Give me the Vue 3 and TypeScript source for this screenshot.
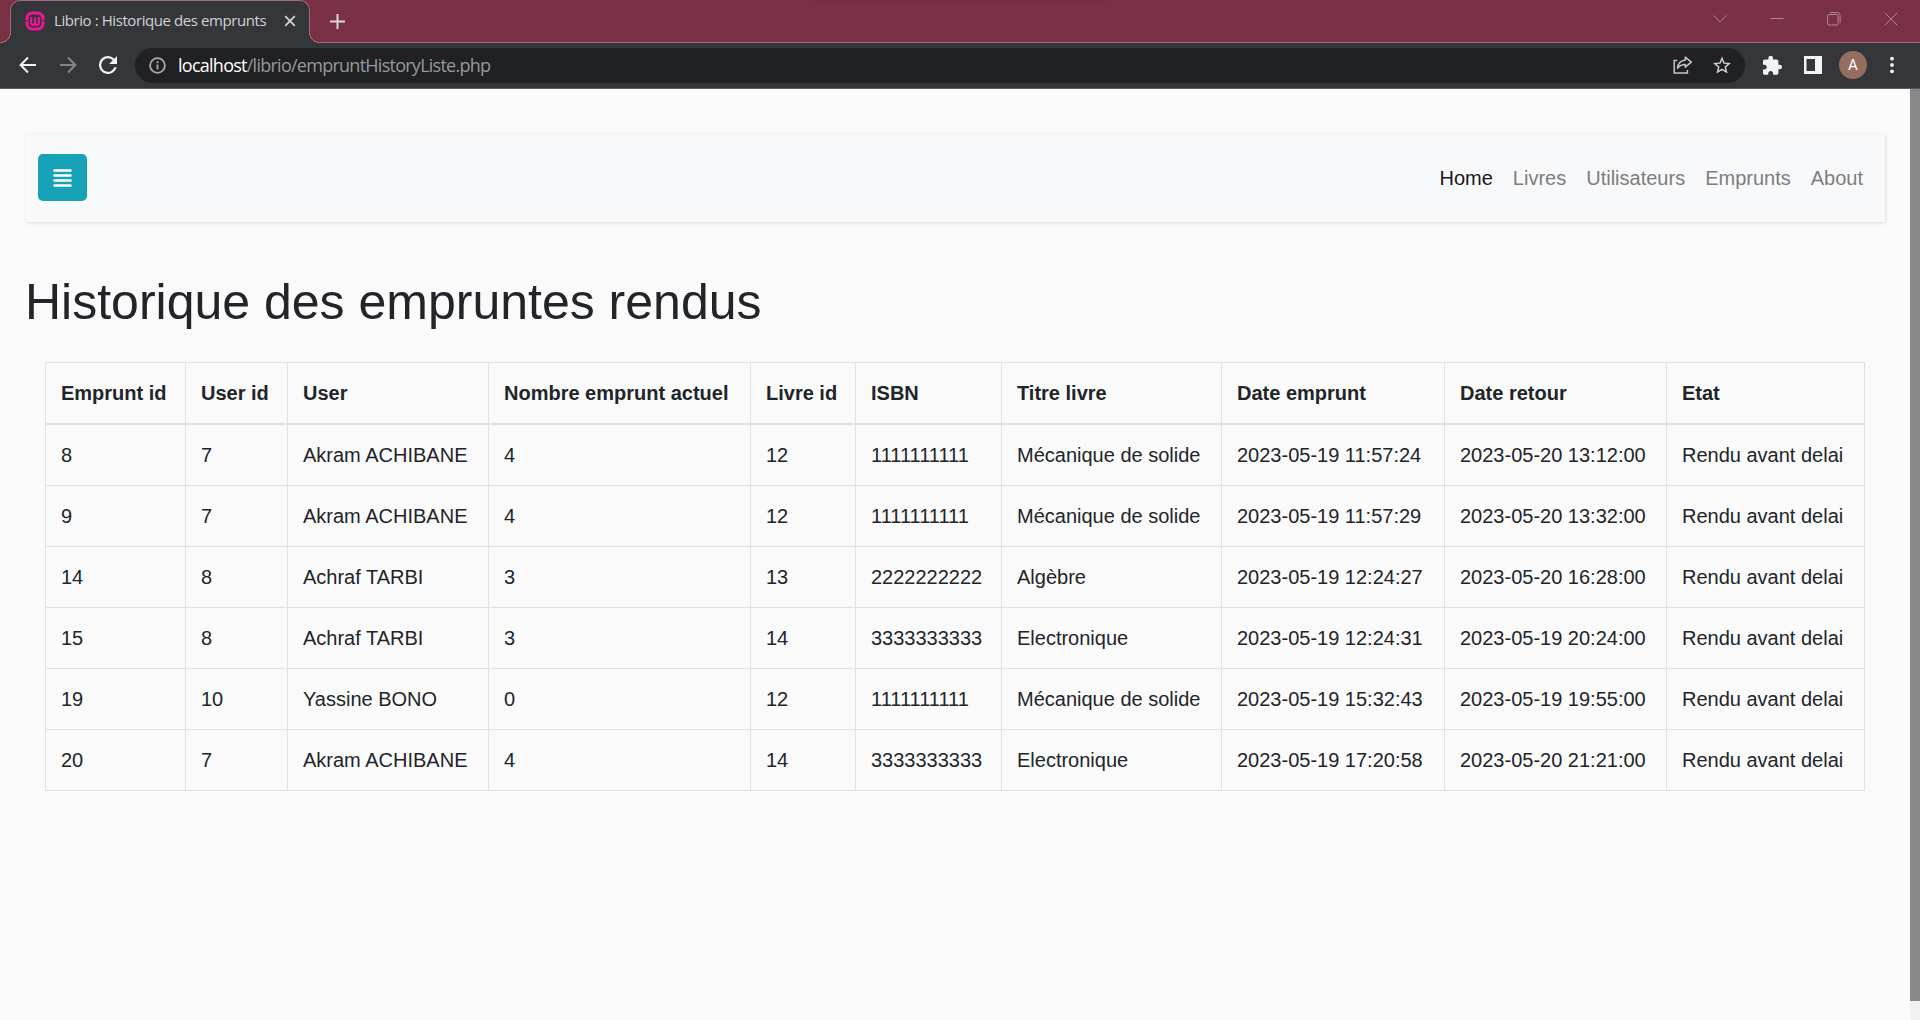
<script setup lang="ts">
interface Loan {
  id: number
  userId: number
  user: string
  active: number
  bookId: number
  isbn: string
  title: string
  borrowed: string
  returned: string
  state: string
}

const links: string[] = ['Home', 'Livres', 'Utilisateurs', 'Emprunts', 'About']

const columns: string[] = [
  'Emprunt id', 'User id', 'User', 'Nombre emprunt actuel', 'Livre id',
  'ISBN', 'Titre livre', 'Date emprunt', 'Date retour', 'Etat',
]

const onTime = 'Rendu avant delai'
const loans: Loan[] = [
  { id: 8, userId: 7, user: 'Akram ACHIBANE', active: 4, bookId: 12, isbn: '1111111111', title: 'Mécanique de solide', borrowed: '2023-05-19 11:57:24', returned: '2023-05-20 13:12:00', state: onTime },
  { id: 9, userId: 7, user: 'Akram ACHIBANE', active: 4, bookId: 12, isbn: '1111111111', title: 'Mécanique de solide', borrowed: '2023-05-19 11:57:29', returned: '2023-05-20 13:32:00', state: onTime },
  { id: 14, userId: 8, user: 'Achraf TARBI', active: 3, bookId: 13, isbn: '2222222222', title: 'Algèbre', borrowed: '2023-05-19 12:24:27', returned: '2023-05-20 16:28:00', state: onTime },
  { id: 15, userId: 8, user: 'Achraf TARBI', active: 3, bookId: 14, isbn: '3333333333', title: 'Electronique', borrowed: '2023-05-19 12:24:31', returned: '2023-05-19 20:24:00', state: onTime },
  { id: 19, userId: 10, user: 'Yassine BONO', active: 0, bookId: 12, isbn: '1111111111', title: 'Mécanique de solide', borrowed: '2023-05-19 15:32:43', returned: '2023-05-19 19:55:00', state: onTime },
  { id: 20, userId: 7, user: 'Akram ACHIBANE', active: 4, bookId: 14, isbn: '3333333333', title: 'Electronique', borrowed: '2023-05-19 17:20:58', returned: '2023-05-20 21:21:00', state: onTime },
]
</script>

<template>
  <div class="window">
    <header class="tabstrip">
      <div class="notch"></div>
      <div class="tab">
        <svg class="favicon" width="20" height="20" viewBox="0 0 20 20" fill="none" stroke="#f5129b">
          <rect x="2" y="2" width="16" height="16" rx="5.5" stroke-width="3" />
          <path d="M0 9.7h3.4M16.6 9.7H20" stroke="#35363a" stroke-width="1.1" />
          <path d="M6.200 6v5.600q0 2.300 1.900 2.300t1.900-2V6.500v5.400q0 2 1.900 2t1.900-2.300V6" stroke-width="2.100" />
        </svg>
        <span class="tab-title">Librio : Historique des emprunts</span>
        <svg class="tab-close" width="12" height="12" viewBox="0 0 12 12" stroke="#d2d3d6" stroke-width="1.8"><path d="M1.200 1.200l9.600 9.600M10.800 1.200l-9.600 9.600" /></svg>
      </div>
      <svg class="new-tab" width="15" height="15" viewBox="0 0 15 15" stroke="#dcd9d4" stroke-width="2"><path d="M7.500 0v15M0 7.500h15" /></svg>
      <div class="controls">
        <svg width="14" height="14" viewBox="0 0 14 14"><path d="M.7 3.500L7 9.800l6.300-6.300" /></svg>
        <svg width="14" height="14" viewBox="0 0 14 14"><path d="M.5 6.500h13" /></svg>
        <svg width="14" height="14" viewBox="0 0 14 14"><rect x=".6" y="2.500" width="10.500" height="10.500" rx="1.500" /><path d="M2.800.6h7.700q2.600 0 2.600 2.600v8" /></svg>
        <svg width="14" height="14" viewBox="0 0 14 14"><path d="M.7.7l12.600 12.600M13.300.7L.7 13.300" /></svg>
      </div>
    </header>

    <div class="toolbar">
      <svg class="back" width="18" height="18" viewBox="0 0 18 18" fill="none" stroke="#f1f3f4" stroke-width="2"><path d="M17 9H2M9 1.500L1.600 9 9 16.500" /></svg>
      <svg class="forward" width="18" height="18" viewBox="0 0 18 18" fill="none" stroke="#85868a" stroke-width="2"><path d="M1 9h15M9 1.500L16.400 9 9 16.500" /></svg>
      <svg class="reload" width="18" height="18" viewBox="4 4 16 16" fill="#f1f3f4"><path d="M17.650 6.350A7.960 7.960 0 0 0 12 4a8 8 0 1 0 7.730 10h-2.080A6 6 0 1 1 12 6c1.660 0 3.140.69 4.220 1.780L13 11h7V4z" /></svg>
      <div class="omnibox">
        <svg class="info" width="17" height="17" viewBox="0 0 17 17" fill="none" stroke="#aba9a5" stroke-width="1.800"><circle cx="8.500" cy="8.500" r="7.400" /><path d="M8.500 7.500v5M8.500 4.300v1.900" /></svg>
        <span class="url"><b>localhost</b>/librio/empruntHistoryListe.php</span>
        <svg class="share" width="20" height="18" viewBox="0 0 20 18" fill="none" stroke="#c6c5c2" stroke-width="1.500"><path d="M4.200 4.500H1.200v12.600h13.200v-3.200" /><path d="M12.300 1.200l6 5-6 5V8.500q-5 0-7.800 3.700Q5.300 5 12.300 4.100z" stroke-linejoin="round" /></svg>
        <svg class="star" width="18" height="18" viewBox="2 1.500 20 20" fill="#d0cfcc"><path d="M22 9.240l-7.190-.62L12 2 9.190 8.630 2 9.240l5.460 4.730L5.820 21 12 17.270 18.180 21l-1.630-7.030L22 9.240zM12 15.400l-3.760 2.270 1-4.280-3.320-2.880 4.380-.38L12 6.100l1.710 4.040 4.380.38-3.320 2.880 1 4.280L12 15.400z" /></svg>
      </div>
      <svg class="puzzle" width="19" height="19" viewBox="2 1.500 21 20.500" fill="#f1f3f4"><path d="M20.500 11H19V7c0-1.100-.9-2-2-2h-4V3.500a2.500 2.500 0 0 0-5 0V5H4c-1.100 0-1.990.9-1.990 2v3.800H3.500c1.490 0 2.700 1.210 2.700 2.700s-1.210 2.700-2.700 2.700H2V20c0 1.100.9 2 2 2h3.800v-1.500c0-1.490 1.210-2.700 2.700-2.700s2.700 1.210 2.700 2.700V22H17c1.100 0 2-.9 2-2v-4h1.500a2.500 2.500 0 0 0 0-5z" /></svg>
      <svg class="panel" width="18" height="18" viewBox="0 0 18 18"><path fill="#f1f3f4" fill-rule="evenodd" d="M0 0h18v18H0zM2.500 3v12H11V3z" /></svg>
      <div class="avatar">A</div>
      <svg class="more" width="4" height="18" viewBox="0 0 4 18" fill="#f1f3f4"><circle cx="2" cy="2.700" r="1.900" /><circle cx="2" cy="9" r="1.900" /><circle cx="2" cy="15.300" r="1.900" /></svg>
    </div>

    <div class="viewport">
      <main class="page">
        <nav class="navbar">
          <button class="toggle" type="button" aria-label="Menu">
            <svg width="19" height="20" viewBox="0 0 19 20" stroke="#fff" stroke-width="2.700" stroke-linecap="round"><path d="M1.600 2.500h15.800M1.600 7.500h15.800M1.600 12.500h15.800M1.600 17.500h15.800" /></svg>
          </button>
          <ul class="links">
            <li v-for="(link, i) in links" :key="link" :class="{ active: i === 0 }">{{ link }}</li>
          </ul>
        </nav>
        <h1>Historique des empruntes rendus</h1>
        <table>
          <colgroup>
            <col v-for="n in columns.length" :key="n" :class="'c' + n" />
          </colgroup>
          <thead>
            <tr><th v-for="c in columns" :key="c">{{ c }}</th></tr>
          </thead>
          <tbody>
            <tr v-for="loan in loans" :key="loan.id">
              <td v-for="(value, key) in loan" :key="key">{{ value }}</td>
            </tr>
          </tbody>
        </table>
      </main>
      <div class="scrollbar"><div class="thumb"></div></div>
    </div>
  </div>
</template>

<style>
body {
  margin: 0;
  overflow: hidden;
}
</style>

<style scoped>
* {
  box-sizing: border-box;
}
.window {
  width: 1920px;
  height: 1020px;
  display: flex;
  flex-direction: column;
  background: #fafafa;
  font-family: "Liberation Sans", Arial, sans-serif;
}
svg {
  display: block;
  flex: none;
}
.tabstrip {
  position: relative;
  height: 43px;
  flex: none;
  display: flex;
  align-items: flex-start;
  padding-left: 10px;
  background: #7b3145;
  border-bottom: 1px solid #a56b7a;
}
.notch {
  position: absolute;
  left: 810px;
  top: 0;
  width: 300px;
  height: 4px;
  border-radius: 0 0 40px 40px / 0 0 4px 4px;
  background: #772e41;
}
.tab {
  position: relative;
  width: 300px;
  height: 43px;
  display: flex;
  align-items: center;
  padding: 0 13px 2px 14px;
  background: #35363a;
  border: 1px solid #a56b7a;
  border-bottom: 0;
  border-radius: 10px 10px 0 0;
}
.tab::before,
.tab::after {
  content: "";
  position: absolute;
  bottom: 0;
  width: 10px;
  height: 10px;
}
.tab::before {
  left: -10px;
  background: radial-gradient(circle at 0 0, #7b3145 8.5px, #a56b7a 9px 9.6px, #35363a 10px);
}
.tab::after {
  right: -10px;
  background: radial-gradient(circle at 100% 0, #7b3145 8.5px, #a56b7a 9px 9.6px, #35363a 10px);
}
.tab-title {
  margin-left: 9px;
  width: 230px;
  padding-bottom: 2px;
  font: 15px/20px "Open Sans", "Noto Sans", sans-serif;
  letter-spacing: -0.42px;
  color: #d2d3d6;
  white-space: nowrap;
}
.new-tab {
  margin: 14px 0 0 20px;
}
.controls {
  margin: 12px 22px 0 auto;
  display: flex;
  gap: 43px;
}
.controls svg {
  fill: none;
  stroke: #b58592;
  stroke-width: 1;
}
.toolbar {
  height: 46px;
  flex: none;
  display: flex;
  align-items: center;
  padding: 0 26px 1px 19px;
  background: #35363a;
  border-bottom: 1px solid #5b5c5f;
}
.forward {
  margin-left: 22px;
}
.reload {
  margin-left: 22px;
}
.omnibox {
  margin-left: 18px;
  width: 1610px;
  height: 35px;
  display: flex;
  align-items: center;
  padding: 0 14px;
  border-radius: 18px;
  background: #202124;
}
.url {
  flex: 1;
  margin-left: 12px;
  font: 18px/24px "Open Sans", "Noto Sans", sans-serif;
  letter-spacing: -0.74px;
  color: #97989b;
  white-space: nowrap;
}
.url b {
  font-weight: 400;
  color: #fff;
}
.star {
  margin-left: 20px;
}
.puzzle {
  margin-left: 18px;
}
.panel {
  margin-left: 22px;
}
.avatar {
  margin-left: 17px;
  width: 28px;
  height: 28px;
  border-radius: 50%;
  background: #946e60;
  color: #fff;
  font: 15px/29px Roboto, sans-serif;
  text-align: center;
}
.more {
  margin-left: auto;
}
.viewport {
  flex: 1;
  min-height: 0;
  display: flex;
}
.page {
  flex: 1;
  padding: 45px 25px 0;
  color: #212529;
  font-size: 20px;
  line-height: 30px;
}
.navbar {
  height: 88px;
  display: flex;
  align-items: center;
  justify-content: space-between;
  padding: 0 22px 1px 13px;
  background: #f8f9fb;
  box-shadow: 1px 1px 3px rgba(0, 0, 0, 0.12);
}
.toggle {
  width: 49px;
  height: 47px;
  display: flex;
  align-items: center;
  justify-content: center;
  padding: 0;
  border: 0;
  border-radius: 5px;
  background: #17a2b8;
}
.links {
  display: flex;
  gap: 20px;
  margin: 0;
  padding: 0;
  list-style: none;
  color: #7c7d7e;
}
.links .active {
  color: #17181a;
}
h1 {
  margin: 50px 0 0;
  font-size: 50px;
  font-weight: 400;
  line-height: 60px;
  white-space: nowrap;
}
table {
  width: 1820px;
  margin: 30px 0 0 20px;
  table-layout: fixed;
  border-collapse: separate;
  border-spacing: 0;
  border-left: 1px solid #dee2e6;
  border-top: 1px solid #dee2e6;
}
th,
td {
  height: 61px;
  padding: 0 0 0 15px;
  border-right: 1px solid #dee2e6;
  border-bottom: 1px solid #dee2e6;
  text-align: left;
  white-space: nowrap;
}
th {
  height: 62px;
  border-bottom-width: 2px;
  font-weight: 700;
}
.c1 { width: 140px; }
.c2 { width: 102px; }
.c3 { width: 201px; }
.c4 { width: 262px; }
.c5 { width: 105px; }
.c6 { width: 146px; }
.c7 { width: 220px; }
.c8 { width: 223px; }
.c9 { width: 222px; }
.c10 { width: 198px; }
.scrollbar {
  width: 10px;
  background: #f1f1f1;
}
.thumb {
  height: 912px;
  background: #888;
}
</style>
